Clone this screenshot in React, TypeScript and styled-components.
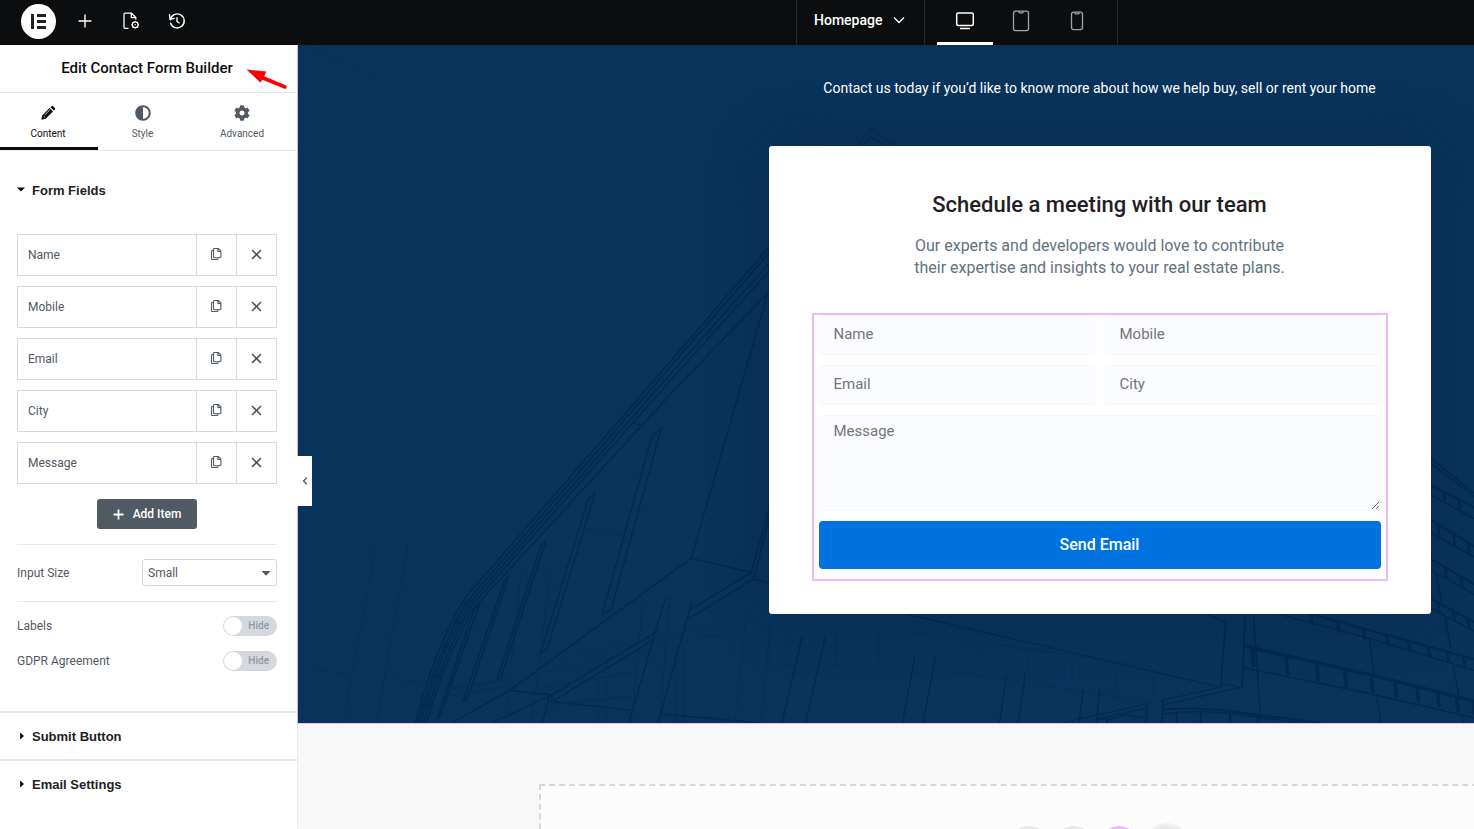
import React, { useState } from "react";
import styled, { createGlobalStyle } from "styled-components";
import { FaAdjust, FaCog } from "react-icons/fa";

const GlobalStyle = createGlobalStyle`
  *, *::before, *::after { box-sizing: border-box; }
  html, body { margin: 0; }
  body, button, input, select, textarea { font-family: Roboto, "Liberation Sans", sans-serif; }
  button { border: 0; padding: 0; background: none; color: inherit; cursor: pointer; }
  h1, h2, p { margin: 0; }
`;

const Shell = styled.div`
  display: flex;
  flex-direction: column;
  height: 100vh;
  overflow: hidden;
`;

/* ---------- top bar ---------- */

const TopBar = styled.header`
  flex: none;
  display: flex;
  justify-content: space-between;
  height: 45px;
  padding-right: 356px;
  background: #0c0d0e;
  color: #fff;
`;

const ToolGroup = styled.div`
  display: flex;
  align-items: center;
  gap: 14px;
  padding: 0 0 2px 21px;
`;

const LogoButton = styled.button`
  display: grid;
  place-items: center;
  width: 35px;
  height: 35px;
  margin-right: -1px;
  border-radius: 50%;
  background: #fff;
`;

const ToolButton = styled.button`
  display: grid;
  place-items: center;
  width: 32px;
  height: 32px;
  padding-bottom: 2px;
`;

const PageGroup = styled.div`
  display: flex;
  border: solid #26282b;
  border-width: 0 1px;
`;

const PageSwitch = styled.button`
  display: flex;
  align-items: center;
  gap: 11px;
  width: 128px;
  padding: 0 0 5px 17px;
  border-right: 1px solid #26282b;
  font-size: 14px;
  font-weight: 500;
`;

const DeviceTabs = styled.div`
  display: flex;
  padding: 0 12px;
`;

const DeviceTab = styled.button<{ $active?: boolean }>`
  display: grid;
  place-items: center;
  width: 56px;
  border-bottom: 3px solid ${(p) => (p.$active ? "#fff" : "transparent")};
  color: ${(p) => (p.$active ? "#fff" : "#9da5ae")};
`;

/* ---------- panel ---------- */

const Workspace = styled.div`
  flex: 1;
  display: flex;
  min-height: 0;
`;

const Panel = styled.aside`
  position: relative;
  z-index: 1;
  flex: none;
  width: 297px;
  background: #fff;
  color: #515962;
  font-size: 12px;
  box-shadow: 0 0 2px rgba(0, 0, 0, 0.15);
`;

const PanelHeader = styled.div`
  position: relative;
  display: flex;
  align-items: center;
  justify-content: center;
  height: 48px;
  padding: 0 3px 2px 0;
  border-bottom: 1px solid #e6e8ea;
`;

const PanelTitle = styled.h1`
  color: #0c0d0e;
  font-size: 15px;
  font-weight: 500;
  line-height: 20px;
`;

const Pointer = styled.svg`
  position: absolute;
  left: 246px;
  top: 23px;
`;

const PanelTabs = styled.div`
  display: grid;
  grid-template-columns: 98fr 91fr 108fr;
  height: 58px;
  border-bottom: 1px solid #e6e8ea;
`;

const PanelTab = styled.button<{ $active?: boolean }>`
  display: flex;
  flex-direction: column;
  align-items: center;
  gap: 5px;
  padding: 12px 2px 0 0;
  border-bottom: 3px solid ${(p) => (p.$active ? "#0c0d0e" : "transparent")};
  color: ${(p) => (p.$active ? "#0c0d0e" : "#515962")};
  font-size: 10px;
  line-height: 16px;
`;

const Section = styled.section`
  & + & {
    border-top: 2px solid #e6e8ea;
  }
`;

const SectionToggle = styled.button<{ $open?: boolean }>`
  display: flex;
  align-items: center;
  gap: 6px;
  width: 100%;
  height: ${(p) => (p.$open ? 78 : 46)}px;
  padding-left: 16px;
  color: #1f2124;
  font-family: "Liberation Sans", Arial, sans-serif;
  font-size: 13px;
  font-weight: 700;
`;

const SectionBody = styled.div`
  padding: 5px 20px 33px 17px;
`;

const ItemList = styled.ul`
  display: grid;
  gap: 10px;
  margin: 0;
  padding: 0;
  list-style: none;
`;

const Item = styled.li`
  display: grid;
  grid-template-columns: 1fr 40px 40px;
  height: 42px;
  border: 1px solid #d5d8dc;
`;

const ItemName = styled.button`
  padding-left: 10px;
  text-align: left;
  font-size: 12px;
`;

const ItemAction = styled.button`
  display: grid;
  place-items: center;
  padding: 0 1px 2px 0;
  border-left: 1px solid #d5d8dc;
`;

const AddButton = styled.button`
  display: flex;
  align-items: center;
  justify-content: center;
  gap: 9px;
  width: 100px;
  height: 30px;
  margin: 15px auto;
  border-radius: 3px;
  background: #515962;
  color: #fff;
  font-size: 12px;
  font-weight: 500;
`;

const ControlRow = styled.div<{ $boxed?: boolean }>`
  display: flex;
  align-items: center;
  justify-content: space-between;
  height: ${(p) => (p.$boxed ? 58 : 35)}px;
  border: solid #e6e8ea;
  border-width: ${(p) => (p.$boxed ? "1px 0" : "0")};
`;

const ToggleRows = styled.div`
  padding-top: 6px;
`;

const SelectWrap = styled.div`
  position: relative;
  width: 135px;
  padding-bottom: 2px;
`;

const Select = styled.select`
  appearance: none;
  display: block;
  width: 100%;
  height: 27px;
  padding: 1px 5px 0;
  border: 1px solid #d5d8dc;
  border-radius: 3px;
  background: #fff;
  color: #515962;
  font-size: 12px;
`;

const SelectArrow = styled.svg`
  position: absolute;
  right: 6px;
  top: 12px;
  pointer-events: none;
`;

const Switch = styled.span`
  position: relative;
  display: flex;
  align-items: center;
  justify-content: flex-end;
  width: 54px;
  height: 20px;
  padding-right: 8px;
  border-radius: 10px;
  background: #d5d8dc;
  color: #9098a3;
  font-size: 10px;
  font-weight: 500;

  &::before {
    content: "";
    position: absolute;
    left: 1px;
    top: 1px;
    width: 18px;
    height: 18px;
    border-radius: 50%;
    background: #fff;
  }
`;

const SwitchInput = styled.input`
  position: absolute;
  inset: 0;
  width: 100%;
  height: 100%;
  margin: 0;
  opacity: 0;
  cursor: pointer;
`;

const CollapseHandle = styled.button`
  position: absolute;
  left: 100%;
  top: 411px;
  display: grid;
  place-items: center;
  width: 15px;
  height: 50px;
  background: #fff;
`;

/* ---------- preview ---------- */

const Canvas = styled.main`
  flex: 1;
  min-width: 0;
  overflow: hidden;
  background: #f8f8f8;
`;

const PreviewPage = styled.div`
  width: calc(100% + 427px);
`;

const Hero = styled.section`
  position: relative;
  display: flex;
  flex-direction: column;
  align-items: center;
  gap: 48px;
  padding: 33px 0 109px;
  border: solid #efbafb;
  border-width: 0 0 1px 1px;
  background: #08335b;
`;

const HeroArt = styled.svg`
  position: absolute;
  inset: 0;
  width: 100%;
  height: 100%;
`;

const HeroText = styled.p`
  position: relative;
  color: #fff;
  font-size: 14px;
  font-weight: 400;
  line-height: 20px;
`;

const Card = styled.div`
  position: relative;
  width: 662px;
  padding: 45px 45px 35px;
  border-radius: 3px;
  background: #fff;
  text-align: center;
  box-shadow: 0 0 60px rgba(12, 22, 50, 0.25);
`;

const CardTitle = styled.h2`
  color: #1f2124;
  font-size: 22px;
  font-weight: 500;
  line-height: 28px;
`;

const CardText = styled.p`
  margin: 16px auto 36px;
  width: 380px;
  color: #5f727f;
  font-size: 16px;
  line-height: 22px;
`;

const Form = styled.form`
  display: grid;
  grid-template-columns: 1fr 1fr;
  gap: 10px;
  padding: 0 5px 10px;
  outline: 2px solid #f0b8fc;
`;

const Field = styled.input`
  min-width: 0;
  height: 40px;
  padding: 0 14px 2px;
  border: 1px solid #f6f7fa;
  border-radius: 4px;
  background: #fbfcff;
  font-size: 15px;
  &::placeholder { color: #757575; }
`;

const MessageField = styled.textarea`
  grid-column: 1 / -1;
  display: block;
  height: 96px;
  padding: 5px 14px;
  border: 1px solid #f6f7fa;
  border-radius: 4px;
  background: #fbfcff;
  font-size: 15px;
  line-height: 20px;
  resize: vertical;
  &::placeholder { color: #757575; }
`;

const SendButton = styled.button`
  grid-column: 1 / -1;
  height: 48px;
  padding-bottom: 2px;
  border-radius: 4px;
  background: #0073e1;
  color: #fff;
  font-size: 16px;
  font-weight: 500;
`;

const DropArea = styled.section`
  display: flex;
  justify-content: center;
  padding: 60px 0;
`;

const DropBox = styled.div`
  display: flex;
  align-items: center;
  justify-content: center;
  gap: 5px;
  width: 1120px;
  padding: 37px 0;
  border: 2px dashed #d5d8dc;
  background: #fcfcfc;
`;

const DropButton = styled.button<{ $tone?: string; $ring?: boolean }>`
  width: ${(p) => (p.$ring ? 46 : 40)}px;
  height: ${(p) => (p.$ring ? 46 : 40)}px;
  border: ${(p) => (p.$ring ? "3px solid #f0f0f1" : "0")};
  border-radius: 50%;
  background: ${(p) => p.$tone || "#e6e8ea"};
`;

/* ---------- icons ---------- */

const LogoMark = () => (
  <svg width="15" height="15" viewBox="0 0 15 15" fill="#1f2124">
    <path d="M0 0h3v15H0zM6 0h9v3H6zM6 6h9v3H6zM6 12h9v3H6z" />
  </svg>
);

const PlusIcon = () => (
  <svg width="14" height="14" viewBox="0 0 14 14" stroke="#fff" strokeWidth="1.4">
    <path d="M7 .5v13M.5 7h13" />
  </svg>
);

const PageSettingsIcon = () => (
  <svg width="18" height="18" viewBox="0 0 18 18" fill="none" stroke="#fff" strokeWidth="1.3">
    <path d="M6.5 16.3H3.2a1.2 1.2 0 0 1-1.2-1.2V2.400a1.200 1.200 0 0 1 1.200-1.200h6.300L13.800 5.500v2M9.300 1.300v4.400h4.400" />
    <circle cx="13.200" cy="12.800" r="2.900" />
    <circle cx="13.200" cy="12.800" r=".7" fill="#fff" stroke="none" />
    <path d="M13.200 8.900v1M13.200 15.700v1M9.300 12.800h1M16.100 12.800h1M10.500 10.100l.7.700M15.200 14.800l.7.700M15.900 10.100l-.7.700M11.200 14.800l-.7.700" strokeWidth="1" />
  </svg>
);

const HistoryIcon = () => (
  <svg width="18" height="18" viewBox="0 0 18 18" fill="none" stroke="#fff" strokeWidth="1.400" strokeLinecap="round" strokeLinejoin="round">
    <path d="M2.600 11.200a7 7 0 1 0-.3-3.400" />
    <path d="M1.500 2.800l.5 4.400 4.300-.8" />
    <path d="M9 5.800v3.700l2.100 1.300" />
  </svg>
);

const ChevronDown = () => (
  <svg width="12" height="8" viewBox="0 0 12 8" fill="none" stroke="#fff" strokeWidth="1.300">
    <path d="M1 1.500l5 5 5-5" />
  </svg>
);

const DesktopIcon = () => (
  <svg width="20" height="18" viewBox="0 0 20 18" fill="none" stroke="currentColor" strokeWidth="1.500">
    <rect x="1.700" y="1" width="16.600" height="12.500" rx="1.500" />
    <path d="M5 16.500h10" />
  </svg>
);

const TabletIcon = () => (
  <svg width="18" height="22" viewBox="0 0 18 22" fill="none" stroke="currentColor" strokeWidth="1.300">
    <rect x="1.500" y="1.200" width="15" height="19.400" rx="2" />
    <path d="M6.500 1.500q.4 1.300 1.400 1.300h2.200q1 0 1.400-1.300" />
  </svg>
);

const PhoneIcon = () => (
  <svg width="14" height="20" viewBox="0 0 14 20" fill="none" stroke="currentColor" strokeWidth="1.300">
    <rect x="1.500" y="1.200" width="11" height="17.400" rx="2" />
    <path d="M4.500 1.500q.3 1.300 1.200 1.300h2.600q.9 0 1.200-1.300" />
  </svg>
);

const PencilIcon = () => (
  <svg width="16" height="16" viewBox="0 0 16 16" fill="currentColor">
    <path d="M1.300 14.800l1-4.500 7.300-7.200 3.400 3.400-7.300 7.200-4.400 1.100zM10.500 2.300l1.200-1.100a1 1 0 0 1 1.400 0l1.800 1.800a1 1 0 0 1 0 1.400l-1.100 1.200z" />
    <path d="M3.700 11.100l1.300 1.300M4.600 10l5.200-5.100" stroke="#fff" strokeWidth=".8" />
  </svg>
);

const CopyIcon = () => (
  <svg width="12" height="14" viewBox="0 0 12 14" fill="none" stroke="currentColor" strokeWidth="1.100" strokeLinejoin="round">
    <path d="M4.400 1.500h3.800l2.700 2.700v5.700a.9.9 0 0 1-.9.900H4.400a.9.9 0 0 1-.9-.9V2.400a.9.9 0 0 1 .9-.9zM7.900 1.600v2.900h2.900" />
    <path d="M3.400 3.500h-1a.9.900 0 0 0-.9.900v7.200a.9.900 0 0 0 .9.900h4.600a.9.900 0 0 0 .9-.9v-.7" />
  </svg>
);

const CloseIcon = () => (
  <svg width="11" height="11" viewBox="0 0 11 11" fill="none" stroke="currentColor" strokeWidth="1.700">
    <path d="M1 1l9 9M10 1l-9 9" />
  </svg>
);

const Caret = ({ open }: { open?: boolean }) => (
  <svg width="10" height="10" viewBox="0 0 10 10" fill="#0c0d0e">
    <path d={open ? "M1 2.500h8l-4 4z" : "M4 1.500v7l4-3.500z"} />
  </svg>
);

/* Line drawing of the office building behind the card */
const BuildingArt = () => {
  const mullions = (xs: number[], top: (x: number) => number, height: (x: number) => number) =>
    xs.map((x) => `M${x} ${top(x)}l5 ${height(x)}`).join("");
  return (
    <HeroArt viewBox="298 45 1603 678" preserveAspectRatio="xMinYMin slice" fill="none" stroke="#022950" aria-hidden="true">
      <g transform="translate(298 385) scale(.33333)" strokeWidth="4">
        <path d="M1413-414L1056 0 500 640Q410 790 352 1014M1413-396L1070 0 505 652Q420 800 360 1014M1413-365L1088 0 510 660Q424 810 368 1014M1413-342L1105 0 515 668Q430 830 376 1014M1409-275L1143 0 525 672Q430 850 386 1014" />
        <path d="M1409-275L1180 520 1360 562 1413 370M1413 400L1367 582 1413 594M1367 582L1168 703M1360 562L1176 675" />
        <path d="M1061 156L1090 130 940 672 912 688ZM870 345L892 322 747 793 728 805ZM728 485L745 465 608 880 596 887ZM620 585L632 574 508 943 495 950ZM530 668L543 661 427 992 418 999Z" />
        <path d="M1003 113l24 7M498 650l22 22M472 704l20 12M437 781l23 7M400 874h28M368 965l32-9" />
        <path d="M1180 520L635 916 460 1014M635 916L762 930 580 1014M762 930L1072 742M1062 768L762 950 1002 976M755 932L733 1014M762 930v20M1102 640L992 1014M1182 648L1080 1014M1087 987L1413 1016" />
        <g stroke="#062e56" strokeWidth="3">
          <path d="M40-1015L238-920M235 478L135 1014M330 478L235 1014M40 855L155 867M258 880L420 895M670 560L620 1014M757 560L700 1014M862 430L990 456M1035 640L1000 1014M1115 630L1085 1014M1345 690L1310 1014M1418 700L1390 1014" strokeOpacity=".6" />
          <path d="M720 836L1345 698M720 866L1345 730M1225 750L1340 768M900 820V1014M925 820V1014M1135 780V1014M1158 780V1014" strokeOpacity=".6" />
          <path d="M440 915L620 885M440 935L620 905M740 905L1010 860M740 960L1000 935" strokeWidth="6" strokeOpacity=".6" />
        </g>
      </g>
      <path d="M857 146L870.600 129 897 146M863 146L869.500 137 888 146M870.600 129l-1 8" />
      <g transform="translate(760 600) scale(.4554 .33333)" strokeWidth="3">
        <path d="M320 42L1012 262 1022 66 980 42M1012 250L1056 262 885 315M1012 262L885 300M848 312L665 368M848 325L740 357" />
        <path d="M93 108L48 369M144 108L100 369M340 170L313 369M385 172L358 369M541 226L526 369M583 220L567 369M710 268L700 369M746 266L738 369M851 306L848 369M885 300L883 369" />
        <path d="M885 328Q960 320 1060 338T1230 369" strokeWidth="6" />
        <path d="M885 342Q960 328 1040 342T1190 369M915 335v34M968 332v37M1032 338v31M1092 346v23M740 357h30l32-12 46 8M762 357v12" strokeWidth="4" />
        <path d="M22 195L380 205 850 305M165 90V195M260 95V200M20 60L300 90 860 200M22 60V195M480 145v70M590 165v75M685 185v75M780 205v75M865 225v70" stroke="#062e56" strokeOpacity=".6" />
      </g>
      <g transform="translate(1210 440) scale(.33333)" strokeWidth="4">
        <path d="M663 55L830 190M663 70L830 198" />
        <path d="M663 135L830 222M663 240L830 342M663 357L830 454M663 476L830 566M300 521L830 668" strokeWidth="6" />
        <path d="M663 165L830 256M663 278L830 372M663 390L830 484M663 506L830 592M200 521L490 598 830 703" />
        <path d={mullions([700, 745], (x) => 135 + (x - 663) * 0.52, () => 30)} strokeWidth="7" />
        <path d={mullions([683, 730, 774], (x) => 240 + (x - 663) * 0.61, () => 35)} strokeWidth="7" />
        <path d={mullions([705, 752], (x) => 357 + (x - 663) * 0.58, () => 33)} strokeWidth="7" />
        <path d={mullions([683, 730, 774], (x) => 476 + (x - 663) * 0.54, () => 30)} strokeWidth="7" />
        <path d={mullions([302, 382, 460, 530, 595, 655, 711, 760], (x) => 521 + (x - 300) * 0.275, (x) => 36 - (x - 300) * 0.01)} strokeWidth="9" />
        <path d="M102 618L484 705 830 793" strokeWidth="10" />
        <path d="M98 682L484 762 830 842" />
        <path d={mullions([126, 228, 320, 404, 484, 555, 621, 683, 740, 788], (x) => 622 + (x - 102) * 0.235, (x) => 54 - (x - 126) * 0.02)} strokeWidth="10" />
        <path d="M106 521L96 742M130 521L153 849M478 598L492 702M500 762L512 849M678 400L695 485M705 535L722 625M730 680L747 770M755 825L762 849" />
      </g>
    </HeroArt>
  );
};

const FIELDS = ["Name", "Mobile", "Email", "City", "Message"];

const HideSwitch = ({ id }: { id: string }) => {
  const [on, setOn] = useState(false);
  return (
    <Switch>
      Hide
      <SwitchInput id={id} type="checkbox" checked={on} onChange={() => setOn(!on)} />
    </Switch>
  );
};

export default function App() {
  return (
    <Shell>
      <GlobalStyle />
      <TopBar>
        <ToolGroup>
          <LogoButton aria-label="Menu"><LogoMark /></LogoButton>
          <ToolButton aria-label="Add element"><PlusIcon /></ToolButton>
          <ToolButton aria-label="Page settings"><PageSettingsIcon /></ToolButton>
          <ToolButton aria-label="History"><HistoryIcon /></ToolButton>
        </ToolGroup>
        <PageGroup>
          <PageSwitch>Homepage <ChevronDown /></PageSwitch>
          <DeviceTabs>
            <DeviceTab $active aria-label="Desktop"><DesktopIcon /></DeviceTab>
            <DeviceTab aria-label="Tablet"><TabletIcon /></DeviceTab>
            <DeviceTab aria-label="Mobile"><PhoneIcon /></DeviceTab>
          </DeviceTabs>
        </PageGroup>
      </TopBar>

      <Workspace>
        <Panel>
          <PanelHeader>
            <PanelTitle>Edit Contact Form Builder</PanelTitle>
            <Pointer width="42" height="22" viewBox="0 0 42 22" fill="#fb0007">
              <path d="M0.500 1.500L20.300 3.600 18.200 8.300 39.500 17.200Q41.300 18.300 40.500 19.900 39.700 21.300 37.800 20.600L16.400 11.700 14.300 14.500Z" />
            </Pointer>
          </PanelHeader>
          <PanelTabs>
            <PanelTab $active><PencilIcon />Content</PanelTab>
            <PanelTab><FaAdjust size={16} />Style</PanelTab>
            <PanelTab><FaCog size={16} />Advanced</PanelTab>
          </PanelTabs>

          <Section>
            <SectionToggle $open><Caret open />Form Fields</SectionToggle>
            <SectionBody>
              <ItemList>
                {FIELDS.map((name) => (
                  <Item key={name}>
                    <ItemName>{name}</ItemName>
                    <ItemAction aria-label={`Duplicate ${name}`}><CopyIcon /></ItemAction>
                    <ItemAction aria-label={`Remove ${name}`}><CloseIcon /></ItemAction>
                  </Item>
                ))}
              </ItemList>
              <AddButton>
                <svg width="11" height="11" viewBox="0 0 11 11" stroke="#fff" strokeWidth="1.800"><path d="M5.500 .5v10M.5 5.500h10" /></svg>
                Add Item
              </AddButton>
              <ControlRow $boxed>
                <label htmlFor="input-size">Input Size</label>
                <SelectWrap>
                  <Select id="input-size" defaultValue="Small">
                    <option>Small</option>
                    <option>Medium</option>
                    <option>Large</option>
                  </Select>
                  <SelectArrow width="10" height="5" viewBox="0 0 10 5" fill="#515962"><path d="M0.500 0h9L5 4.800z" /></SelectArrow>
                </SelectWrap>
              </ControlRow>
              <ToggleRows>
                <ControlRow>
                  <label htmlFor="labels">Labels</label>
                  <HideSwitch id="labels" />
                </ControlRow>
                <ControlRow>
                  <label htmlFor="gdpr">GDPR Agreement</label>
                  <HideSwitch id="gdpr" />
                </ControlRow>
              </ToggleRows>
            </SectionBody>
          </Section>
          <Section>
            <SectionToggle><Caret />Submit Button</SectionToggle>
          </Section>
          <Section>
            <SectionToggle><Caret />Email Settings</SectionToggle>
          </Section>
          <CollapseHandle aria-label="Collapse panel">
            <svg width="6" height="8" viewBox="0 0 6 8" fill="none" stroke="#515962" strokeWidth="1.300"><path d="M4.800 .8L1.500 4l3.300 3.200" /></svg>
          </CollapseHandle>
        </Panel>

        <Canvas>
          <PreviewPage>
            <Hero>
              <BuildingArt />
              <HeroText>Contact us today if you’d like to know more about how we help buy, sell or rent your home</HeroText>
              <Card>
                <CardTitle>Schedule a meeting with our team</CardTitle>
                <CardText>Our experts and developers would love to contribute their expertise and insights to your real estate plans.</CardText>
                <Form onSubmit={(e) => e.preventDefault()}>
                  <Field aria-label="Name" placeholder="Name" />
                  <Field aria-label="Mobile" placeholder="Mobile" />
                  <Field aria-label="Email" placeholder="Email" />
                  <Field aria-label="City" placeholder="City" />
                  <MessageField aria-label="Message" placeholder="Message" />
                  <SendButton>Send Email</SendButton>
                </Form>
              </Card>
            </Hero>
            <DropArea>
              <DropBox>
                <DropButton aria-label="Add container" />
                <DropButton aria-label="Add template" />
                <DropButton $tone="#f0b8fc" aria-label="Add kit" />
                <DropButton $ring aria-label="Add block" />
              </DropBox>
            </DropArea>
          </PreviewPage>
        </Canvas>
      </Workspace>
    </Shell>
  );
}
